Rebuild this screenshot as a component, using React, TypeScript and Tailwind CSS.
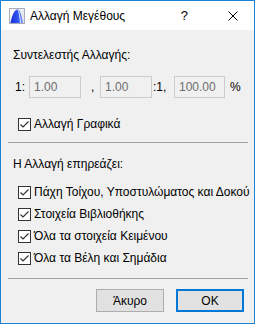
import React from 'react';

const font = { fontFamily: '"Liberation Sans", "Noto Sans", sans-serif' };

function AppIcon() {
  return (
    <svg width="16" height="16" viewBox="0 0 16 16">
      <defs>
        <linearGradient id="bg" x1="0" y1="0" x2="1" y2="1">
          <stop offset="0" stopColor="#ffffff" />
          <stop offset="1" stopColor="#d8dbe6" />
        </linearGradient>
        <linearGradient id="blue" x1="0" y1="0" x2="1" y2="0">
          <stop offset="0" stopColor="#1c2fd6" />
          <stop offset="0.6" stopColor="#2f55f0" />
          <stop offset="1" stopColor="#7da0ff" />
        </linearGradient>
      </defs>
      <rect x="0.5" y="0.5" width="15" height="15" fill="url(#bg)" stroke="#a8acb8" />
      <path d="M1.5 15 C3 7 5.5 1.5 8.5 1.5 C11 1.5 12.5 7 14 15 Z" fill="url(#blue)" />
      <path d="M8.5 2 C10 3 11 8 11.5 15" stroke="#ffffff" strokeWidth="1" fill="none" opacity="0.8" />
    </svg>
  );
}

function Check({ label }: { label: string }) {
  return (
    <div className="flex h-4 items-center">
      <span className="flex h-[13px] w-[13px] shrink-0 items-center justify-center border border-[#333333] bg-white">
        <svg width="11" height="11" viewBox="0 0 11 11">
          <path d="M1.5 5.5 L4 8 L9.5 2.5" stroke="#333333" strokeWidth="1.2" fill="none" />
        </svg>
      </span>
      <span className="ml-[3px] whitespace-nowrap text-[12px] leading-4 text-black">{label}</span>
    </div>
  );
}

function Field({ value, w }: { value: string; w: string }) {
  return (
    <div className={`flex h-[22px] ${w} items-center border border-[#cccccc] bg-[#f0f0f0] pl-1 text-[12px] text-[#6d6d6d]`}>
      {value}
    </div>
  );
}

export default function App() {
  return (
    <div
      className="flex h-[324px] w-[255px] flex-col border border-[#1883d7] bg-[#f0f0f0] text-black"
      style={font}
    >
      {/* title bar */}
      <div className="flex h-[29px] items-center bg-white">
        <div className="ml-[8px] mt-[1px]">
          <AppIcon />
        </div>
        <span className="ml-[5px] text-[12px] leading-4">Αλλαγή Μεγέθους</span>
        <span className="ml-auto mr-[40px] text-[13px] leading-4">?</span>
        <svg className="mr-[16px]" width="10" height="10" viewBox="0 0 10 10">
          <path d="M0.5 0.5 L9.5 9.5 M9.5 0.5 L0.5 9.5" stroke="#000000" strokeWidth="1" />
        </svg>
      </div>

      {/* body */}
      <div className="flex flex-1 flex-col pt-[17px]">
        <div className="pl-3 text-[12px] leading-4">Συντελεστής Αλλαγής:</div>

        <div className="mt-[13px] flex h-[22px] items-center pl-[14px] text-[12px]">
          <span className="w-[14px]">1:</span>
          <Field value="1.00" w="w-[52px]" />
          <span className="w-[19px] pl-[10px]">,</span>
          <Field value="1.00" w="w-[52px]" />
          <span className="w-[22px] pl-px">:1,</span>
          <Field value="100.00" w="w-[51px]" />
          <span className="ml-[5px]">%</span>
        </div>

        <div className="mt-[18px] pl-[17px]">
          <Check label="Αλλαγή Γραφικά" />
        </div>

        <div className="ml-[7px] mt-[10px] h-px w-[240px] bg-[#a0a0a0]" />

        <div className="mt-[13px] pl-3 text-[12px] leading-4">Η Αλλαγή επηρεάζει:</div>

        <div className="mt-[12px] flex flex-col gap-[6px] pl-[17px]">
          <Check label="Πάχη Τοίχου, Υποστυλώματος και Δοκού" />
          <Check label="Στοιχεία Βιβλιοθήκης" />
          <Check label="Όλα τα στοιχεία Κειμένου" />
          <Check label="Όλα τα Βέλη και Σημάδια" />
        </div>

        <div className="ml-[7px] mt-[12px] h-px w-[240px] bg-[#a0a0a0]" />

        <div className="mt-[10px] flex justify-end gap-3 pr-[10px]">
          <button className="flex h-[23px] w-[68px] items-center justify-center border border-[#adadad] bg-[#e1e1e1] text-[12px]">
            Άκυρο
          </button>
          <button className="flex h-[23px] w-[68px] items-center justify-center border-2 border-[#0078d7] bg-[#e1e1e1] text-[12px]">
            OK
          </button>
        </div>
      </div>
    </div>
  );
}
